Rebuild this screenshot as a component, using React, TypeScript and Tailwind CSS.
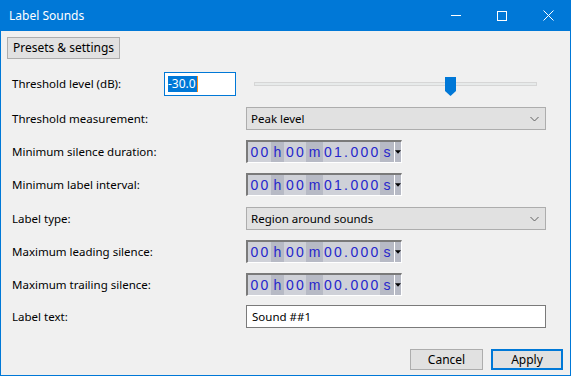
import React from 'react';

const FONT = { fontFamily: '"Noto Sans", "Open Sans", sans-serif' };

const Digits: React.FC<{ chars: string; w: string }> = ({ chars, w }) => (
  <div className={`${w} h-full bg-[#cfd1d8] flex items-center justify-center`}>
    {chars.split('').map((c, i) => (
      <span key={i} className="w-[10px] text-center">{c}</span>
    ))}
  </div>
);

const Unit: React.FC<{ ch: string; w: string }> = ({ ch, w }) => (
  <div className={`${w} h-full bg-[#b7bac5] flex items-center justify-center`}>{ch}</div>
);

const TimeBox: React.FC<{ secs: string }> = ({ secs }) => (
  <div className="w-[156px] h-[23px] border-t-2 border-l-2 border-[#7a7a7a] border-r border-b border-r-white border-b-white flex text-[#2626cc] text-[14px] leading-none"
    style={{ fontFamily: '"Liberation Sans Narrow", "Liberation Sans", Arial, sans-serif' }}>
    <Digits chars="00" w="w-[23px]" />
    <Unit ch="h" w="w-[13px]" />
    <Digits chars="00" w="w-[22px]" />
    <Unit ch="m" w="w-[17px]" />
    <Digits chars={secs} w="w-[20px]" />
    <div className="w-[6px] h-full bg-[#cfd1d8] flex items-center justify-center">.</div>
    <Digits chars="000" w="w-[31px]" />
    <Unit ch="s" w="w-[14px]" />
    <div className="w-[7px] h-full bg-[#b7bac5] border-l border-white flex items-center justify-center">
      <svg width="7" height="4" viewBox="0 0 7 4"><path d="M0 0h7L3.5 4z" fill="#000" /></svg>
    </div>
  </div>
);

const Choice: React.FC<{ value: string }> = ({ value }) => (
  <div className="w-[300px] h-[23px] bg-[#e1e1e1] border border-[#adadad] flex items-center justify-between pl-[4px] pr-[6px]">
    <span>{value}</span>
    <svg width="9" height="6" viewBox="0 0 9 6"><path d="M0.5 1l4 4 4-4" fill="none" stroke="#606060" strokeWidth="1" /></svg>
  </div>
);

const Row: React.FC<{ label: string; mt: string; children: React.ReactNode }> = ({ label, mt, children }) => (
  <div className={`flex items-center ${mt}`}>
    <div className="w-[245px] pl-[11px]">{label}</div>
    {children}
  </div>
);

export default function App() {
  return (
    <div className="w-[571px] h-[376px] bg-[#f0f0f0] border border-t-0 border-[#0078d7] flex flex-col text-[11.5px] text-black overflow-hidden" style={FONT}>
      <div className="h-[31px] -mx-px bg-[#0078d7] flex items-center text-white text-[12px] shrink-0">
        <span className="pl-[9px] flex-1">Label Sounds</span>
        <div className="w-[46px] h-full flex items-center justify-center">
          <div className="w-[10px] h-px bg-white" />
        </div>
        <div className="w-[46px] h-full flex items-center justify-center">
          <div className="w-[10px] h-[10px] border border-white" />
        </div>
        <div className="w-[46px] h-full flex items-center justify-center">
          <svg width="11" height="11" viewBox="0 0 11 11"><path d="M0.5 0.5l10 10M10.5 0.5l-10 10" stroke="#fff" strokeWidth="1" /></svg>
        </div>
      </div>

      <div className="pl-[6px] mt-[6px]">
        <div className="w-[113px] h-[22px] bg-[#e1e1e1] border border-[#adadad] flex items-center justify-center text-[12px]">Presets &amp; settings</div>
      </div>

      <div className="flex items-center mt-[13px] h-[24px]">
        <div className="w-[163px] pl-[11px]">Threshold level (dB):</div>
        <div className="w-[72px] h-[24px] bg-white border border-[#0078d7] flex items-center pl-[3px] text-[12px]">
          <span className="bg-[#0078d7] text-white leading-[16px] pr-px">-30.0</span>
          <span className="w-px h-[16px] bg-[#ff8c1a]" />
        </div>
        <div className="ml-[18px] w-[283px] h-[24px] relative flex items-center">
          <div className="w-full h-[4px] bg-[#e7eaea] border border-[#d6d6d6]" />
          <svg className="absolute left-[191px] top-[5px]" width="11" height="19" viewBox="0 0 11 19">
            <path d="M0 0h11v14l-5.5 5L0 14z" fill="#0078d7" />
          </svg>
        </div>
      </div>

      <Row label="Threshold measurement:" mt="mt-[11px]"><Choice value="Peak level" /></Row>
      <Row label="Minimum silence duration:" mt="mt-[10px]"><TimeBox secs="01" /></Row>
      <Row label="Minimum label interval:" mt="mt-[10px]"><TimeBox secs="01" /></Row>
      <Row label="Label type:" mt="mt-[11px]"><Choice value="Region around sounds" /></Row>
      <Row label="Maximum leading silence:" mt="mt-[10px]"><TimeBox secs="00" /></Row>
      <Row label="Maximum trailing silence:" mt="mt-[10px]"><TimeBox secs="00" /></Row>
      <Row label="Label text:" mt="mt-[9px]">
        <div className="w-[300px] h-[23px] bg-white border border-[#7a7a7a] flex items-center pl-[5px]">Sound ##1</div>
      </Row>

      <div className="flex justify-end gap-[8px] mt-[21px] pr-[7px] text-[12px]">
        <div className="w-[73px] h-[21px] bg-[#e1e1e1] border border-[#adadad] flex items-center justify-center">Cancel</div>
        <div className="w-[72px] h-[21px] bg-[#e1e1e1] border-2 border-[#0078d7] flex items-center justify-center">Apply</div>
      </div>
    </div>
  );
}
